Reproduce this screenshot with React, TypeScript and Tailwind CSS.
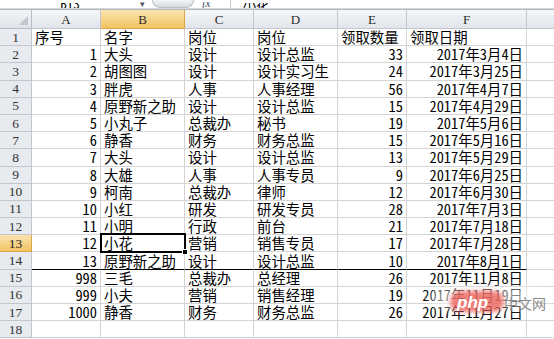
import React from 'react'

const COLS = [69, 84, 69, 84, 69, 120]
const CELL_FONT = { fontFamily: '"Noto Sans Mono CJK SC", "Noto Sans CJK SC", sans-serif' }

type Val = string | number
const data: Val[][] = [
    ['序号', '名字', '岗位', '岗位', '领取数量', '领取日期'],
    [1, '大头', '设计', '设计总监', 33, '2017年3月4日'],
    [2, '胡图图', '设计', '设计实习生', 24, '2017年3月25日'],
    [3, '胖虎', '人事', '人事经理', 56, '2017年4月7日'],
    [4, '原野新之助', '设计', '设计总监', 15, '2017年4月29日'],
    [5, '小丸子', '总裁办', '秘书', 19, '2017年5月6日'],
    [6, '静香', '财务', '财务总监', 15, '2017年5月16日'],
    [7, '大头', '设计', '设计总监', 13, '2017年5月29日'],
    [8, '大雄', '人事', '人事专员', 9, '2017年6月25日'],
    [9, '柯南', '总裁办', '律师', 12, '2017年6月30日'],
    [10, '小红', '研发', '研发专员', 28, '2017年7月3日'],
    [11, '小明', '行政', '前台', 21, '2017年7月18日'],
    [12, '小花', '营销', '销售专员', 17, '2017年7月28日'],
    [13, '原野新之助', '设计', '设计总监', 10, '2017年8月1日'],
    [998, '三毛', '总裁办', '总经理', 26, '2017年11月8日'],
    [999, '小夫', '营销', '销售经理', 19, '2017年11月19日'],
    [1000, '静香', '财务', '财务总监', 26, '2017年11月27日'],
    ['', '', '', '', '', ''],
]

function FormulaBar() {
    return (
        <div className="relative h-[8px] overflow-hidden bg-white shrink-0">
            <div className="flex items-end h-[8px] text-[13px] leading-[8px] text-black" style={CELL_FONT}>
                <div className="w-[140px] text-center h-[5px] overflow-hidden leading-[2px]">B13</div>
                <span className="text-[9px] text-gray-600 w-[10px] leading-[8px]">▾</span>
                <div className="w-[42px] h-[8px] rounded-b-full bg-gradient-to-b from-[#f4f5f7] to-[#d5d9de] border border-t-0 border-[#b9bec5] ml-[2px]" />
                <div className="ml-[8px] w-[24px] h-[6px] overflow-hidden italic text-[12px] leading-[2px] text-gray-600" style={{ fontFamily: '"Liberation Serif", serif' }}>fx</div>
                <div className="w-px h-full bg-[#c8ccd2] ml-[4px]" />
                <div className="ml-[12px] h-[5px] overflow-hidden leading-[2px]">小花</div>
            </div>
        </div>
    )
}

function ColHeader() {
    const letters = ['A', 'B', 'C', 'D', 'E', 'F']
    return (
        <div className="flex h-[19px] shrink-0 text-[13px] text-[#2b2b2b]" style={{ fontFamily: '"Liberation Serif", serif' }}>
            <div className="relative w-[32px] border-r border-b border-[#b9bec6] bg-gradient-to-b from-[#f3f5f7] to-[#dfe3e8]">
                <div className="absolute right-[3px] bottom-[3px] w-0 h-0 border-l-[9px] border-l-transparent border-b-[9px] border-b-[#c2c6cc]" />
            </div>
            {letters.map((l, i) => (
                <div
                    key={l}
                    style={{ width: COLS[i] }}
                    className={
                        'flex items-center justify-center border-r border-b pt-[1px] ' +
                        (l === 'B'
                            ? 'bg-gradient-to-b from-[#fbe3ae] to-[#f2c463] border-[#d9a845]'
                            : 'bg-gradient-to-b from-[#f5f6f8] to-[#e1e5ea] border-[#c3c7cd]')
                    }
                >
                    {l}
                </div>
            ))}
            <div className="flex-1 border-b border-[#c3c7cd] bg-gradient-to-b from-[#f5f6f8] to-[#e1e5ea]" />
        </div>
    )
}

function Row({ n, vals }: { n: number; vals: Val[] }) {
    const sel = n === 13
    const underline = n === 14
    return (
        <div className="flex h-[17.2px] shrink-0">
            <div
                className={
                    'w-[32px] flex items-center justify-center text-[13.5px] leading-[16px] border-r border-b pt-[1px] ' +
                    (sel
                        ? 'bg-gradient-to-b from-[#fbe3ae] to-[#f2c463] border-[#d9a845] text-[#222]'
                        : 'bg-[#e7eaee] border-[#c3c7cd] text-[#333]')
                }
                style={{ fontFamily: '"Liberation Serif", serif' }}
            >
                {n}
            </div>
            {vals.map((v, i) => {
                const right = n > 1 && (i === 0 || i === 4 || i === 5)
                return (
                    <div
                        key={i}
                        style={{ width: COLS[i], ...CELL_FONT }}
                        className={
                            'flex items-center whitespace-nowrap text-[14.4px] leading-[16px] text-black border-r border-b border-r-[#d4d4d4] px-[3px] ' +
                            (underline ? 'border-b-black ' : 'border-b-[#d4d4d4] ') +
                            (right ? 'justify-end' : 'justify-start')
                        }
                    >
                        {v}
                    </div>
                )
            })}
            <div className="flex-1 border-b border-[#d4d4d4]" />
        </div>
    )
}

export default function App() {
    return (
        <div className="relative w-[554px] h-[339px] overflow-hidden bg-white flex flex-col">
            <FormulaBar />
            <div className="h-[2px] shrink-0 bg-[#d3d7dc] border-b border-[#b4b9c0]" />
            <ColHeader />
            {data.map((r, i) => (
                <Row key={i} n={i + 1} vals={r} />
            ))}

            {/* selection box on B13 */}
            <div className="absolute left-[100px] top-[233px] w-[86px] h-[20px] border-2 border-black pointer-events-none" />
            <div className="absolute left-[182px] top-[249px] w-[6px] h-[6px] bg-black border border-white pointer-events-none" />

            {/* watermark */}
            <div className="absolute left-[430px] top-[288px] w-[120px] h-[20px] rounded-full bg-white/55 blur-[5px] pointer-events-none" />
            <div className="absolute left-[450px] top-[291px] w-[54px] h-[21px] rounded-full bg-[#ea4a42]/70 blur-[2px] pointer-events-none" />
            <div className="absolute left-[457px] top-[290px] text-[17px] italic font-bold text-white pointer-events-none" style={{ fontFamily: '"Liberation Sans", sans-serif' }}>
                php
            </div>
            <div className="absolute left-[504px] top-[295px] text-[14px] leading-[16px] text-[#8a8a8a] pointer-events-none" style={{ fontFamily: '"Noto Sans CJK SC", sans-serif' }}>
                中文网
            </div>
        </div>
    )
}
